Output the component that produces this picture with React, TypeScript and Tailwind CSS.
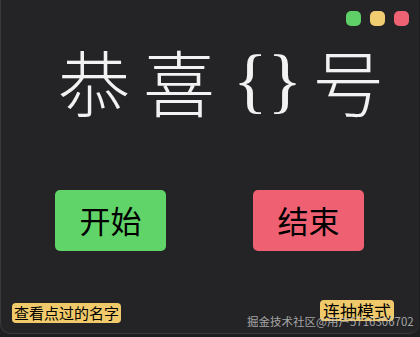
import React from 'react';

const cjk = { fontFamily: '"Noto Sans CJK SC", "Noto Sans", sans-serif' };

export default function App() {
  return (
    <div className="w-[420px] h-[337px] bg-[#1e1e20] overflow-hidden relative" style={cjk}>
      <div className="w-[419px] h-[334px] bg-[#242426] rounded-b-[10px] border-l border-b border-[#39393b] flex flex-col">
        {/* window dots */}
        <div className="flex justify-end gap-[9px] pt-[11px] pr-[10px]">
          <div className="w-[15px] h-[15px] rounded-[5px] bg-[#5fcf68]" />
          <div className="w-[15px] h-[15px] rounded-[5px] bg-[#f0cd70]" />
          <div className="w-[15px] h-[15px] rounded-[5px] bg-[#ee6273]" />
        </div>

        {/* title */}
        <div className="flex items-center h-[74px] mt-[17px] pl-[57px] text-[72px] leading-none font-light text-[#f2f2f2]">
          <span>恭</span>
          <span className="ml-[13px]">喜</span>
          <span className="ml-[18px]" style={{ fontFamily: '"Liberation Serif", serif' }}>{'{}'}</span>
          <span className="ml-[10px]">号</span>
        </div>

        {/* buttons */}
        <div className="flex pl-[54px] gap-[87px] mt-[73px]">
          <button className="w-[111px] h-[61px] rounded-[5px] bg-[#60d468] text-[31px] text-black">开始</button>
          <button className="w-[111px] h-[61px] rounded-[5px] bg-[#ee6072] text-[31px] text-black">结束</button>
        </div>

        {/* bottom tags */}
        <div className="flex justify-between items-start mt-auto mb-[10px] pl-[11px] pr-[25px]">
          <span className="bg-[#f0ca6a] rounded-[4px] px-[2px] h-[20px] text-[15px] leading-[20px] text-black">查看点过的名字</span>
          <span className="bg-[#f0ca6a] rounded-[4px] px-[3px] h-[21px] -mt-[3px] text-[17px] leading-[21px] text-black">连抽模式</span>
        </div>
      </div>

      {/* watermark */}
      <div className="absolute left-[247px] top-[313px] text-[11.5px] text-[#c8c8c8]/80 whitespace-nowrap" style={cjk}>
        掘金技术社区@用户5716306702
      </div>
    </div>
  );
}
